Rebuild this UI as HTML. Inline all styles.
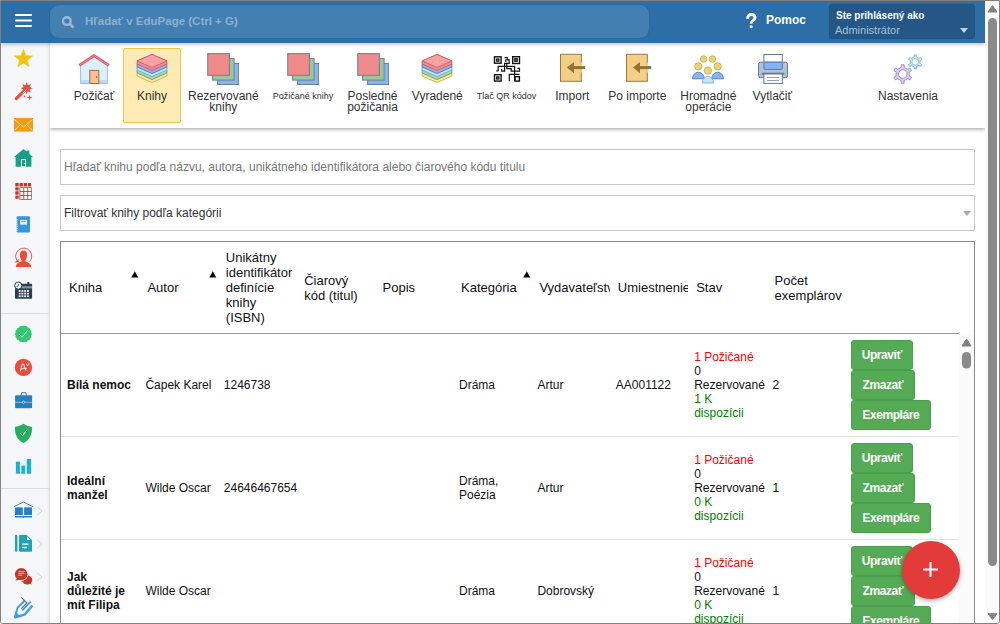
<!DOCTYPE html>
<html><head><meta charset="utf-8">
<style>
*{box-sizing:border-box}
html,body{margin:0;padding:0;width:1000px;height:624px;overflow:hidden;background:#fff;font-family:"Liberation Sans",sans-serif;color:#000}
#frame{position:absolute;left:0;top:0;width:1000px;height:624px;border:1px solid #808080;border-radius:0 0 3px 3px;overflow:hidden;background:#fff}
.abs{position:absolute}
#hdr{position:absolute;left:0;top:0;width:984px;height:42px;background:#2c6ea5;z-index:3;box-shadow:0 2px 3px rgba(40,30,20,.22)}
#gsearch{position:absolute;left:48px;top:3px;width:601px;height:35px;border-radius:10px;background:#437fb1;border:1px solid rgba(30,85,135,.55)}
#user{position:absolute;left:828px;top:3px;width:146px;height:35px;background:#245785;border-radius:3px;border:1px solid #22527e}
#side{position:absolute;left:0;top:41px;width:49px;height:590px;background:#f5f6f8;box-shadow:inset -3px 0 3px -2px rgba(0,0,0,.12);z-index:2}
#tb{position:absolute;left:49px;top:41px;width:935px;height:86px;background:#fff;box-shadow:0 2px 3px rgba(0,0,0,.28);z-index:1}
.ti{position:absolute;top:6px;height:75px;border:1px solid transparent;border-radius:2px}
.ti.sel{background:#fdebb3;border-color:#f1c552}
.lb{position:absolute;top:49px;text-align:center;font-size:12px;line-height:11px;color:#333;white-space:nowrap}
.lb.sm{font-size:9px}
.inp{position:absolute;left:59px;width:915px;height:36px;border:1px solid #c8c8c8;font-size:12px;line-height:34px;padding-left:3px}
#tbl{position:absolute;left:59px;top:240px;width:915px;height:500px;border:1px solid #8a8a8a}
.th{position:absolute;top:0;height:91px;font-size:13px;line-height:15px;color:#111;overflow:hidden;padding:0 2px 0 8px;display:flex;align-items:center}
.row{position:absolute;left:0;width:898px;border-bottom:1px solid #e3e3e3}
.td{position:absolute;top:0;height:102px;font-size:12px;line-height:14px;color:#111;padding:0 6px;display:flex;align-items:center}
.tdc,.thc{width:100%}
.btn{position:absolute;height:30px;letter-spacing:-0.45px;background:#55ab55;color:#fff;font-weight:bold;font-size:12px;line-height:28px;border-radius:3px;text-align:center;border:1px solid #4a9f4a}
.red{color:#f00}.grn{color:#008000}
#fab{position:absolute;left:901px;top:540px;width:58px;height:58px;border-radius:50%;background:#e33b39;box-shadow:0 2px 4px rgba(0,0,0,.3);z-index:5}
#vsb{position:absolute;left:984px;top:0;width:14px;height:622px;background:#fafafa;z-index:4}

</style></head><body>
<div id="frame">
  <div id="hdr">
    <svg class="abs" style="left:14px;top:10px" width="18" height="20" viewBox="0 0 18 20"><rect x="0" y="3.1" width="17" height="2" rx="0.8" fill="#fff"/><rect x="0" y="8.5" width="17" height="2" rx="0.8" fill="#fff"/><rect x="0" y="13.9" width="17" height="2" rx="0.8" fill="#fff"/></svg>
    <div id="gsearch">
      <svg class="abs" style="left:12px;top:11px" width="14" height="14" viewBox="0 0 14 14"><circle cx="4.9" cy="5.1" r="3.85" fill="none" stroke="#98bad8" stroke-width="2.3"/><path d="M7.7,7.9 L10.9,11" stroke="#98bad8" stroke-width="2.5" stroke-linecap="round"/></svg>
      <div class="abs" style="left:35px;top:9px;font-size:11.5px;font-weight:bold;color:#8cb0d1;line-height:14px;white-space:nowrap">Hľadať v EduPage (Ctrl + G)</div>
    </div>
    <svg class="abs" style="left:0;top:0" width="984" height="42" viewBox="1 1 984 42"><path d="M747.6,18.8 C747.5,15.6 749.3,14.5 751.2,14.5 C753.6,14.5 755,15.9 755,17.7 C755,19.6 753.7,20.3 752.6,21 C751.7,21.6 751.2,22.2 751.2,23.7" fill="none" stroke="#fff" stroke-width="2.9"/><circle cx="751.1" cy="26.7" r="1.55" fill="#fff"/></svg>
    <div class="abs" style="left:765px;top:12px;font-size:12px;font-weight:bold;color:#fff;line-height:15px">Pomoc</div>
    <div id="user">
      <div class="abs" style="left:6px;top:5px;font-size:10px;font-weight:bold;color:#fff;line-height:12px;white-space:nowrap">Ste prihlásený ako</div>
      <div class="abs" style="left:5px;top:18px;font-size:11px;color:#a3c0dc;line-height:14px">Administrátor</div>
      <div class="abs" style="left:130px;top:23px;width:0;height:0;border-left:4px solid transparent;border-right:4px solid transparent;border-top:5px solid #c9d3dd"></div>
    </div>
  </div>
  <div id="side"><svg class="abs" style="left:0;top:0" width="48" height="582" viewBox="1 42 48 582">
<rect x="1" y="313" width="48" height="1" fill="#dcdcdc"/>
<rect x="1" y="488" width="48" height="1" fill="#dcdcdc"/>
<polygon points="23.45,49.30 25.80,55.66 32.58,55.93 27.25,60.14 29.09,66.67 23.45,62.90 17.81,66.67 19.65,60.14 14.32,55.93 21.10,55.66" fill="#f1c40f" stroke="#f1c40f" stroke-width="0.6" stroke-linejoin="round"/>
<line x1="16.2" y1="98.7" x2="24.6" y2="90.3" stroke="#e74c3c" stroke-width="3.1" stroke-linecap="round"/>
<polygon points="26.60,82.10 27.82,85.24 30.91,83.89 29.56,86.98 32.70,88.20 29.56,89.42 30.91,92.51 27.82,91.16 26.60,94.30 25.38,91.16 22.29,92.51 23.64,89.42 20.50,88.20 23.64,86.98 22.29,83.89 25.38,85.24" fill="#e74c3c"/>
<line x1="22.6" y1="93.6" x2="26.6" y2="89.2" stroke="#f5f6f8" stroke-width="0.9"/>
<polygon points="29.60,94.60 30.24,96.86 32.50,97.50 30.24,98.14 29.60,100.40 28.96,98.14 26.70,97.50 28.96,96.86" fill="#e74c3c"/>
<polygon points="23.3,97.3 24.6,95.2 25.8,97.3" fill="#e74c3c"/>
<rect x="14" y="118" width="19" height="13.6" fill="#f39c12"/>
<path d="M14.3,119.4 L23.5,127 L32.7,119.4 M14.3,130.6 L19.6,125.2 M32.7,130.6 L27.4,125.2" stroke="#fbe3bd" stroke-width="0.9" fill="none"/>
<polygon points="14,157 23.5,149 26.8,151.8 26.8,150.6 29.4,150.6 29.4,154 33,157 31.4,157 31.4,166.8 15.6,166.8 15.6,157" fill="#17a085"/>
<rect x="21.4" y="159.6" width="4.2" height="7.2" fill="none" stroke="#f5f6f8" stroke-width="0.9"/>
<rect x="24.1" y="163" width="0.8" height="1" fill="#f5f6f8"/>
<rect x="15.30" y="183" width="3.4" height="3.4" rx="0.5" fill="#c0392b"/>
<rect x="19.45" y="183" width="3.4" height="3.4" rx="0.5" fill="#c0392b"/>
<rect x="23.60" y="183" width="3.4" height="3.4" rx="0.5" fill="#c0392b"/>
<rect x="27.75" y="183" width="3.4" height="3.4" rx="0.5" fill="#c0392b"/>
<rect x="15.3" y="187.15" width="3.4" height="3.4" rx="0.5" fill="#c0392b"/>
<rect x="15.3" y="191.30" width="3.4" height="3.4" rx="0.5" fill="#c0392b"/>
<rect x="15.3" y="195.45" width="3.4" height="3.4" rx="0.5" fill="#c0392b"/>
<rect x="19.45" y="187.15" width="12.45" height="12.65" rx="0.5" fill="#c0392b"/>
<rect x="20.30" y="188.00" width="3.05" height="3.1" fill="#fff"/>
<rect x="20.30" y="191.95" width="3.05" height="3.1" fill="#fff"/>
<rect x="20.30" y="195.90" width="3.05" height="3.1" fill="#fff"/>
<rect x="24.25" y="188.00" width="3.05" height="3.1" fill="#fff"/>
<rect x="24.25" y="191.95" width="3.05" height="3.1" fill="#fff"/>
<rect x="24.25" y="195.90" width="3.05" height="3.1" fill="#fff"/>
<rect x="28.20" y="188.00" width="3.05" height="3.1" fill="#fff"/>
<rect x="28.20" y="191.95" width="3.05" height="3.1" fill="#fff"/>
<rect x="28.20" y="195.90" width="3.05" height="3.1" fill="#fff"/>
<rect x="16.6" y="216.2" width="13.4" height="16.4" rx="1" fill="#3498db"/>
<rect x="20.2" y="220" width="6.8" height="4.6" fill="#fff"/><rect x="21" y="221.2" width="5.2" height="0.8" fill="#3498db"/><rect x="21" y="222.4" width="5.2" height="1.4" fill="#cfe5f6"/>
<rect x="15.9" y="219.30" width="2" height="0.7" fill="#fff"/>
<rect x="15.9" y="221.50" width="2" height="0.7" fill="#fff"/>
<rect x="15.9" y="223.70" width="2" height="0.7" fill="#fff"/>
<rect x="15.9" y="225.90" width="2" height="0.7" fill="#fff"/>
<rect x="15.9" y="228.10" width="2" height="0.7" fill="#fff"/>
<rect x="15.9" y="230.30" width="2" height="0.7" fill="#fff"/>
<path d="M19.9,255 C19.9,251.8 21.4,250.6 23.5,250.6 C25.6,250.6 27.1,251.8 27.1,255 C27.1,258 26,259.6 25.4,260.4 L25.6,262 L21.4,262 L21.6,260.4 C21,259.6 19.9,258 19.9,255 Z" fill="#e74c3c"/>
<path d="M15.8,267 C16,263.5 18.6,262.6 21.3,261.6 L25.7,261.6 C28.4,262.6 31,263.5 31.2,267 Z" fill="#e74c3c"/>
<path d="M17,260.5 A8,8 0 1 1 29.6,261.5" fill="none" stroke="#e74c3c" stroke-width="0.9"/>
<polygon points="14.6,262.5 18.4,258.8 18.9,262.2" fill="#e74c3c"/>
<rect x="15" y="283.8" width="17.1" height="15" rx="0.8" fill="#2c3e50"/>
<rect x="22" y="286.2" width="10" height="2.2" fill="#8a96a3"/>
<rect x="27.3" y="282" width="2" height="2.4" fill="#2c3e50"/>
<rect x="18.70" y="290.10" width="1.9" height="1.7" fill="#fff"/>
<rect x="18.70" y="292.75" width="1.9" height="1.7" fill="#fff"/>
<rect x="18.70" y="295.40" width="1.9" height="1.7" fill="#fff"/>
<rect x="21.45" y="290.10" width="1.9" height="1.7" fill="#fff"/>
<rect x="21.45" y="292.75" width="1.9" height="1.7" fill="#fff"/>
<rect x="21.45" y="295.40" width="1.9" height="1.7" fill="#fff"/>
<rect x="24.20" y="290.10" width="1.9" height="1.7" fill="#fff"/>
<rect x="24.20" y="292.75" width="1.9" height="1.7" fill="#fff"/>
<rect x="24.20" y="295.40" width="1.9" height="1.7" fill="#fff"/>
<rect x="26.95" y="290.10" width="1.9" height="1.7" fill="#fff"/>
<rect x="26.95" y="292.75" width="1.9" height="1.7" fill="#fff"/>
<rect x="26.95" y="295.40" width="1.9" height="1.7" fill="#fff"/>
<circle cx="18.3" cy="285.6" r="3.6" fill="#f5f6f8" stroke="#2c3e50" stroke-width="1"/>
<path d="M18.5,284 L17.6,286.6 L16.4,286.6" stroke="#2c3e50" stroke-width="0.8" fill="none"/>
<polygon points="23.40,325.40 24.94,326.25 26.69,326.05 27.79,327.43 29.48,327.92 29.97,329.61 31.35,330.71 31.15,332.46 32.00,334.00 31.15,335.54 31.35,337.29 29.97,338.39 29.48,340.08 27.79,340.57 26.69,341.95 24.94,341.75 23.40,342.60 21.86,341.75 20.11,341.95 19.01,340.57 17.32,340.08 16.83,338.39 15.45,337.29 15.65,335.54 14.80,334.00 15.65,332.46 15.45,330.71 16.83,329.61 17.32,327.92 19.01,327.43 20.11,326.05 21.86,326.25" fill="#2ecc71"/>
<path d="M19.2,334.2 L22.2,337.1 L27.4,330.6" stroke="#fff" stroke-width="0.9" fill="none"/>
<circle cx="23.45" cy="367.4" r="8.65" fill="#e74c3c"/>
<path d="M20.4,371 L22.3,364 Q22.8,362.9 23.5,364 L25.9,370.2 M20.6,369.6 Q23.2,367.6 26.3,368.4 M26.6,364.3 L27.6,365.9 L28.9,363.5" stroke="#fff" stroke-width="0.9" fill="none" stroke-linecap="round"/>
<path d="M21,395.4 L21.6,392.7 L25.8,392.7 L26.4,395.4" fill="none" stroke="#2980b9" stroke-width="1"/>
<rect x="15.1" y="395.2" width="17" height="13.1" rx="1" fill="#2980b9"/>
<rect x="15.1" y="401.9" width="17" height="0.6" fill="#cfe0ee"/>
<circle cx="23.6" cy="402.2" r="1.2" fill="#2980b9" stroke="#e8f0f6" stroke-width="0.6"/>
<path d="M23.5,423.8 C26.5,425.6 29.5,426.6 32.1,427 C32.2,434 30,439.8 23.5,443 C17,439.8 14.8,434 14.9,427 C17.5,426.6 20.5,425.6 23.5,423.8 Z" fill="#27ae60"/>
<path d="M20.3,433.4 L22.6,435.6 L26.8,429.8" stroke="#fff" stroke-width="0.9" fill="none"/>
<rect x="15.9" y="461.6" width="4" height="12.2" fill="#17b3d1"/><rect x="21.4" y="465.6" width="3.8" height="8.2" fill="#17b3d1"/><rect x="26.7" y="459" width="4.4" height="14.8" fill="#17b3d1"/>
<path d="M14.2,506.6 L23.45,502 L32.7,506.6" stroke="#2a7fc1" stroke-width="0.9" fill="none"/>
<path d="M14.9,507.6 Q18.8,506.9 22.8,507.6 L22.8,515.1 L14.9,515.1 Z" fill="#2a7fc1"/><path d="M24.1,507.6 Q28,506.9 32,507.6 L32,515.1 L24.1,515.1 Z" fill="#2a7fc1"/>
<path d="M14.9,515.9 L32,515.9 L32,517.6 L24.2,517.6 L23.45,518.3 L22.7,517.6 L14.9,517.6 Z" fill="#2a7fc1"/>
<path d="M37.3,507.0 L42,511.0 L37.3,515.0" stroke="#cfcfcf" stroke-width="0.9" fill="none"/>
<path d="M37.3,540.0 L42,544.0 L37.3,548.0" stroke="#cfcfcf" stroke-width="0.9" fill="none"/>
<path d="M37.3,573.0 L42,577.0 L37.3,581.0" stroke="#cfcfcf" stroke-width="0.9" fill="none"/>
<rect x="14.9" y="534.7" width="2.5" height="17.1" rx="1.2" fill="#22a2b2"/>
<path d="M20,535 L26.6,535 L32,540 L32,550.6 Q32,551.8 30.8,551.8 L20.2,551.8 Q19,551.8 19,550.6 L19,536 Q19,535 20,535 Z" fill="#22a2b2"/>
<path d="M27,536.6 L27,540.1 L30.4,540.1 Z" fill="#fff"/>
<rect x="22.1" y="543.4" width="6.5" height="1.4" rx="0.6" fill="#fff"/><rect x="22.1" y="546.8" width="4.9" height="1.4" rx="0.6" fill="#fff"/>
<ellipse cx="27.3" cy="580" rx="5" ry="4.5" fill="#c0392b"/><path d="M26,582 L32.2,584.8 L28.5,581 Z" fill="#c0392b"/><path d="M21,581.3 L25,578 L27,583 Z" fill="#c0392b"/>
<ellipse cx="21.2" cy="574.2" rx="6.9" ry="6.7" fill="#f5f6f8"/>
<ellipse cx="21.2" cy="574.2" rx="6.3" ry="6.1" fill="#c0392b"/><path d="M17,578.5 L14.8,580.6 L20.5,579.8 Z" fill="#c0392b"/>
<rect x="18.3" y="571" width="6.3" height="1.1" fill="#e9a19a"/><rect x="18.3" y="572.8" width="6.3" height="1.1" fill="#e9a19a"/><rect x="18.3" y="574.7" width="4" height="1.1" fill="#e9a19a"/>
<path d="M14.8,617.6 L17.6,607.6 L24.6,600.8" fill="none" stroke="#3b9fe3" stroke-width="1.9" stroke-linejoin="round"/>
<path d="M14.8,617.6 L25,614.3 L32.4,605.4" fill="none" stroke="#3b9fe3" stroke-width="2.4" stroke-linejoin="round"/>
<path d="M22.2,610.4 L30.7,601.7" fill="none" stroke="#3b9fe3" stroke-width="1.8"/>
<polygon points="14.2,618.3 15.8,611.6 20,616.2" fill="#3b9fe3"/>
<path d="M21.3,597.3 L26.9,603 L21.3,608.6" stroke="#6e6870" stroke-width="1.1" fill="none"/>
</svg></div>
  <div id="tb"><div class="ti" style="left:15.00px;width:58.00px"></div>
<svg class="abs" style="left:28.00px;top:11.00px" width="32" height="32" viewBox="0 0 32 32"><path d="M2.6,12.2 L16,3.4 L29.4,12.2 L29.4,30.5 L2.6,30.5 Z" fill="#dcf0fd" stroke="#9dbde2" stroke-width="1"/><rect x="2.6" y="27" width="26.8" height="3.5" fill="#b9dbf4"/><path d="M2.6,30.5 L29.4,30.5" stroke="#9dbde2" stroke-width="1"/><rect x="11.8" y="17.4" width="9" height="13.1" fill="#fdc291" stroke="#9c6b47" stroke-width="1"/><circle cx="18.6" cy="24" r="0.7" fill="#7a4f33"/><path d="M1.2,12.4 L16,2.6 L30.8,12.4" fill="none" stroke="#df5560" stroke-width="2.8" stroke-linejoin="miter"/><path d="M1.6,12.3 L16,2.7 L30.4,12.3" fill="none" stroke="#f39aa0" stroke-width="0.8"/></svg>
<div class="lb" style="left:15.00px;width:58.00px">Požičať</div>
<div class="ti sel" style="left:73.00px;width:58.00px"></div>
<svg class="abs" style="left:86.00px;top:11.00px" width="32" height="32" viewBox="0 0 32 32"><polygon points="1.1,20.0 16,13.5 30.9,20.0 30.9,23.0 16,29.5 1.1,23.0" fill="#fbe8a3" stroke="#d8b653" stroke-width="1" stroke-linejoin="round"/><polygon points="1.1,17.0 16,10.5 30.9,17.0 30.9,20.0 16,26.5 1.1,20.0" fill="#a9d6ac" stroke="#6da672" stroke-width="1" stroke-linejoin="round"/><polygon points="1.1,14.0 16,7.5 30.9,14.0 30.9,17.0 16,23.5 1.1,17.0" fill="#c6e5fb" stroke="#7da9d9" stroke-width="1" stroke-linejoin="round"/><polygon points="1.1,11.0 16,4.5 30.9,11.0 30.9,14.0 16,20.5 1.1,14.0" fill="#89b5ee" stroke="#4f7fc6" stroke-width="1" stroke-linejoin="round"/><polygon points="1.1,8 16,1.5 30.9,8 30.9,11 16,17.5 1.1,11" fill="#ef8e92" stroke="#d4606a" stroke-width="1" stroke-linejoin="round"/><polygon points="1.1,8 16,1.5 30.9,8 16,14.5" fill="#f6a3a6" stroke="#d4606a" stroke-width="1" stroke-linejoin="round"/><circle cx="11" cy="8.5" r="0.45" fill="#e0747a"/><circle cx="14" cy="6.8" r="0.45" fill="#e0747a"/><circle cx="18.5" cy="9" r="0.45" fill="#e0747a"/><circle cx="21" cy="7.2" r="0.45" fill="#e0747a"/></svg>
<div class="lb" style="left:73.00px;width:58.00px">Knihy</div>
<div class="ti" style="left:131.00px;width:84.70px"></div>
<svg class="abs" style="left:157.00px;top:11.00px" width="32" height="32" viewBox="0 0 32 32"><rect x="10.6" y="10.5" width="21" height="21" fill="#89b4ef" stroke="#6b7f95" stroke-width="1"/><rect x="5.6" y="5.6" width="21.5" height="21.5" fill="#9cc79b" stroke="#6b7f95" stroke-width="1"/><rect x="0.7" y="0.6" width="21.7" height="21.7" fill="#f08b8b" stroke="#6b7f95" stroke-width="1"/></svg>
<div class="lb" style="left:131.00px;width:84.70px">Rezervované<br>knihy</div>
<div class="ti" style="left:215.70px;width:74.50px"></div>
<svg class="abs" style="left:237.00px;top:11.00px" width="32" height="32" viewBox="0 0 32 32"><rect x="10.6" y="10.5" width="21" height="21" fill="#89b4ef" stroke="#6b7f95" stroke-width="1"/><rect x="5.6" y="5.6" width="21.5" height="21.5" fill="#9cc79b" stroke="#6b7f95" stroke-width="1"/><rect x="0.7" y="0.6" width="21.7" height="21.7" fill="#f08b8b" stroke="#6b7f95" stroke-width="1"/></svg>
<div class="lb sm" style="left:215.70px;width:74.50px">Požičané knihy</div>
<div class="ti" style="left:290.20px;width:64.70px"></div>
<svg class="abs" style="left:307.00px;top:11.00px" width="32" height="32" viewBox="0 0 32 32"><rect x="10.6" y="10.5" width="21" height="21" fill="#89b4ef" stroke="#6b7f95" stroke-width="1"/><rect x="5.6" y="5.6" width="21.5" height="21.5" fill="#9cc79b" stroke="#6b7f95" stroke-width="1"/><rect x="0.7" y="0.6" width="21.7" height="21.7" fill="#f08b8b" stroke="#6b7f95" stroke-width="1"/></svg>
<div class="lb" style="left:290.20px;width:64.70px">Posledné<br>požičania</div>
<div class="ti" style="left:354.90px;width:64.90px"></div>
<svg class="abs" style="left:371.00px;top:11.00px" width="32" height="32" viewBox="0 0 32 32"><polygon points="1.1,20.0 16,13.5 30.9,20.0 30.9,23.0 16,29.5 1.1,23.0" fill="#fbe8a3" stroke="#d8b653" stroke-width="1" stroke-linejoin="round"/><polygon points="1.1,17.0 16,10.5 30.9,17.0 30.9,20.0 16,26.5 1.1,20.0" fill="#a9d6ac" stroke="#6da672" stroke-width="1" stroke-linejoin="round"/><polygon points="1.1,14.0 16,7.5 30.9,14.0 30.9,17.0 16,23.5 1.1,17.0" fill="#c6e5fb" stroke="#7da9d9" stroke-width="1" stroke-linejoin="round"/><polygon points="1.1,11.0 16,4.5 30.9,11.0 30.9,14.0 16,20.5 1.1,14.0" fill="#89b5ee" stroke="#4f7fc6" stroke-width="1" stroke-linejoin="round"/><polygon points="1.1,8 16,1.5 30.9,8 30.9,11 16,17.5 1.1,11" fill="#ef8e92" stroke="#d4606a" stroke-width="1" stroke-linejoin="round"/><polygon points="1.1,8 16,1.5 30.9,8 16,14.5" fill="#f6a3a6" stroke="#d4606a" stroke-width="1" stroke-linejoin="round"/><circle cx="11" cy="8.5" r="0.45" fill="#e0747a"/><circle cx="14" cy="6.8" r="0.45" fill="#e0747a"/><circle cx="18.5" cy="9" r="0.45" fill="#e0747a"/><circle cx="21" cy="7.2" r="0.45" fill="#e0747a"/></svg>
<div class="lb" style="left:354.90px;width:64.90px">Vyradené</div>
<div class="ti" style="left:419.80px;width:73.50px"></div>
<svg class="abs" style="left:441.00px;top:11.00px" width="32" height="32" viewBox="0 0 32 32"><g transform="translate(-491,-53)"><g fill="none" stroke="#111" stroke-width="1.4"><rect x="494.5" y="56.8" width="6.6" height="6.4"/><rect x="512.7" y="56.7" width="6.8" height="6.8"/><rect x="494.5" y="74.7" width="6.6" height="6.4"/><rect x="515" y="76.7" width="4.4" height="4.4"/></g><g fill="#666" stroke="#111" stroke-width="1"><rect x="496.6" y="58.9" width="2.4" height="2.3"/><rect x="514.7" y="58.6" width="2.6" height="2.8"/><rect x="496.6" y="76.8" width="2.4" height="2.3"/></g><path d="M504.6,57.6 H507.2 V59.9 H509.2 V63.4 H504.6 V71.2 H501.7 V68.9 M498.2,71 V66.3 H514.6 V81 M506.8,63.4 V68.6 H511.2 V71.2 H519.5 V68.4 H517.3 M509.3,81.2 V74.4 H519.5 M496.3,70.8 H498.2 M505.8,59.4 V62" fill="none" stroke="#111" stroke-width="1.2"/></g></svg>
<div class="lb sm" style="left:419.80px;width:73.50px">Tlač QR kódov</div>
<div class="ti" style="left:493.30px;width:58.00px"></div>
<svg class="abs" style="left:505.50px;top:11.00px" width="32" height="32" viewBox="0 0 32 32"><rect x="4.5" y="1.3" width="20.8" height="27" fill="#f5cf87" stroke="#9c7a3c" stroke-width="1"/><rect x="24.6" y="9.5" width="1.5" height="10" fill="#f5cf87"/><polygon points="11,14.6 18,8.9 18,20.3" fill="#917335"/><rect x="17.5" y="13.1" width="11.7" height="3" fill="#917335"/></svg>
<div class="lb" style="left:493.30px;width:58.00px">Import</div>
<div class="ti" style="left:551.30px;width:72.00px"></div>
<svg class="abs" style="left:571.80px;top:11.00px" width="32" height="32" viewBox="0 0 32 32"><rect x="4.5" y="1.3" width="20.8" height="27" fill="#f5cf87" stroke="#9c7a3c" stroke-width="1"/><rect x="24.6" y="9.5" width="1.5" height="10" fill="#f5cf87"/><polygon points="11,14.6 18,8.9 18,20.3" fill="#917335"/><rect x="17.5" y="13.1" width="11.7" height="3" fill="#917335"/></svg>
<div class="lb" style="left:551.30px;width:72.00px">Po importe</div>
<div class="ti" style="left:623.30px;width:70.00px"></div>
<svg class="abs" style="left:642.00px;top:11.00px" width="32" height="32" viewBox="0 0 32 32"><g fill="#e8d27b" stroke="#c9a94c" stroke-width="0.8"><circle cx="11.6" cy="6" r="3.3"/><circle cx="20.4" cy="6" r="3.3"/><circle cx="6.3" cy="13.4" r="3.6"/><circle cx="25.6" cy="13.4" r="3.6"/><circle cx="15.9" cy="17.6" r="3.7"/></g><path d="M0.5,25.8 A5.9,6.6 0 0 1 12.3,25.8 Z" fill="#88b3ee" stroke="#4f7fc6" stroke-width="0.9"/><path d="M19.7,25.8 A5.9,6.6 0 0 1 31.5,25.8 Z" fill="#88b3ee" stroke="#4f7fc6" stroke-width="0.9"/><path d="M10.3,30 A5.6,6.6 0 0 1 21.5,30 Z" fill="#c6e5fb" stroke="#7da9d9" stroke-width="0.9"/></svg>
<div class="lb" style="left:623.30px;width:70.00px">Hromadné<br>operácie</div>
<div class="ti" style="left:693.30px;width:58.00px"></div>
<svg class="abs" style="left:707.00px;top:11.00px" width="32" height="32" viewBox="0 0 32 32"><rect x="6.9" y="1.5" width="18.4" height="8" fill="#fff" stroke="#66788f" stroke-width="1"/><rect x="1.5" y="9.2" width="29" height="15.5" rx="2" fill="#b3c1d4" stroke="#66788f" stroke-width="1"/><rect x="6.9" y="9.2" width="18.4" height="7.2" rx="1" fill="#88b3ee" stroke="#4e7cc0" stroke-width="1"/><rect x="4.5" y="19.8" width="23" height="2" rx="1" fill="#66788f"/><rect x="6.9" y="21" width="18.4" height="9.4" fill="#fff" stroke="#66788f" stroke-width="1"/><rect x="10" y="24" width="12" height="1" fill="#8fa0b3"/><rect x="10" y="27" width="12" height="1" fill="#8fa0b3"/><circle cx="27.6" cy="12.6" r="0.9" fill="#f4d23c"/></svg>
<div class="lb" style="left:693.30px;width:58.00px">Vytlačiť</div>
<div class="ti" style="left:821.00px;width:74.00px"></div>
<svg class="abs" style="left:842.00px;top:11.00px" width="32" height="32" viewBox="0 0 32 32"><polygon points="9.19,14.27 9.23,11.72 12.17,11.72 12.21,14.27 15.78,16.33 18.01,15.08 19.48,17.63 17.28,18.94 17.28,23.06 19.48,24.37 18.01,26.92 15.78,25.67 12.21,27.73 12.17,30.28 9.23,30.28 9.19,27.73 5.62,25.67 3.39,26.92 1.92,24.37 4.12,23.06 4.12,18.94 1.92,17.63 3.39,15.08 5.62,16.33" fill="#d9cbf1" stroke="#9a80c2" stroke-width="0.8" stroke-linejoin="round"/><circle cx="10.7" cy="21" r="4.3" fill="#fff" stroke="#9a80c2" stroke-width="0.8"/><polygon points="22.09,3.92 22.09,1.89 24.31,1.89 24.31,3.92 26.95,5.45 28.72,4.43 29.83,6.36 28.07,7.37 28.07,10.43 29.83,11.44 28.72,13.37 26.95,12.35 24.31,13.88 24.31,15.91 22.09,15.91 22.09,13.88 19.45,12.35 17.68,13.37 16.57,11.44 18.33,10.43 18.33,7.37 16.57,6.36 17.68,4.43 19.45,5.45" fill="#c9e8f8" stroke="#78add2" stroke-width="0.8" stroke-linejoin="round"/><circle cx="23.2" cy="8.9" r="3.3" fill="#fff" stroke="#78add2" stroke-width="0.8"/></svg>
<div class="lb" style="left:821.00px;width:74.00px">Nastavenia</div></div>
  <div class="inp" style="top:148px;color:#777">Hľadať knihu podľa názvu, autora, unikátneho identifikátora alebo čiarového kódu titulu</div>
  <div class="inp" style="top:194px;color:#333">Filtrovať knihy podľa kategórii
    <div class="abs" style="left:902px;top:15px;width:0;height:0;border-left:4px solid transparent;border-right:4px solid transparent;border-top:5px solid #aaa"></div>
  </div>
  <div id="tbl"><div class="th" style="left:0.00px;width:78.40px"><div class="thc">Kniha</div></div>
<div class="th" style="left:78.40px;width:78.40px"><div class="thc">Autor</div></div>
<div class="th" style="left:156.80px;width:78.40px"><div class="thc">Unikátny identifikátor definície knihy (ISBN)</div></div>
<div class="th" style="left:235.20px;width:78.40px"><div class="thc">Čiarový kód (titul)</div></div>
<div class="th" style="left:313.60px;width:78.40px"><div class="thc">Popis</div></div>
<div class="th" style="left:392.00px;width:78.40px"><div class="thc">Kategória</div></div>
<div class="th" style="left:470.40px;width:78.40px"><div class="thc">Vydavateľstvo</div></div>
<div class="th" style="left:548.80px;width:78.40px"><div class="thc">Umiestnenie</div></div>
<div class="th" style="left:627.20px;width:78.40px"><div class="thc">Stav</div></div>
<div class="th" style="left:705.60px;width:78.40px"><div class="thc">Počet exemplárov</div></div>
<svg class="abs" style="left:69.80px;top:28.80px" width="8" height="7" viewBox="0 0 8 7"><polygon points="0.3,6.6 3.8,0.2 7.3,6.6" fill="#000"/></svg>
<svg class="abs" style="left:148.20px;top:28.80px" width="8" height="7" viewBox="0 0 8 7"><polygon points="0.3,6.6 3.8,0.2 7.3,6.6" fill="#000"/></svg>
<svg class="abs" style="left:461.80px;top:28.80px" width="8" height="7" viewBox="0 0 8 7"><polygon points="0.3,6.6 3.8,0.2 7.3,6.6" fill="#000"/></svg>
<div class="abs" style="left:0;top:91px;width:898px;height:1px;background:#8b9bb0"></div>
<div class="abs" style="left:898px;top:92px;width:15px;height:400px;background:#fafafa"></div>
<svg class="abs" style="left:898px;top:92px" width="15" height="40" viewBox="0 0 15 40"><polygon points="3,12 7.5,5 12,12" fill="#808080" stroke="#808080" stroke-width="1" stroke-linejoin="round"/><rect x="3" y="18" width="9" height="16.5" rx="4.5" fill="#8a8a8a"/></svg>
<div class="row" style="top:92px;height:103px">
<div class="td" style="left:0.00px;width:78.40px"><div class="tdc"><b>Bílá nemoc</b></div></div>
<div class="td" style="left:78.40px;width:78.40px"><div class="tdc">Čapek Karel</div></div>
<div class="td" style="left:156.80px;width:78.40px"><div class="tdc">1246738</div></div>
<div class="td" style="left:392.00px;width:78.40px"><div class="tdc">Dráma</div></div>
<div class="td" style="left:470.40px;width:78.40px"><div class="tdc">Artur</div></div>
<div class="td" style="left:548.80px;width:78.40px"><div class="tdc">AA001122</div></div>
<div class="td" style="left:627.20px;width:78.40px"><div class="tdc"><span class="red">1 Požičané</span><br>0<br>Rezervované<br><span class="grn">1 K<br>dispozícii</span></div></div>
<div class="td" style="left:705.60px;width:78.40px"><div class="tdc">2</div></div>
<div class="btn" style="left:790.00px;top:6px;width:61.5px">Upraviť</div>
<div class="btn" style="left:790.00px;top:36px;width:63.6px">Zmazať</div>
<div class="btn" style="left:790.00px;top:66px;width:79.6px">Exempláre</div>
</div>
<div class="row" style="top:195px;height:103px">
<div class="td" style="left:0.00px;width:78.40px"><div class="tdc"><b>Ideální manžel</b></div></div>
<div class="td" style="left:78.40px;width:78.40px"><div class="tdc">Wilde Oscar</div></div>
<div class="td" style="left:156.80px;width:78.40px"><div class="tdc">24646467654</div></div>
<div class="td" style="left:392.00px;width:78.40px"><div class="tdc">Dráma, Poézia</div></div>
<div class="td" style="left:470.40px;width:78.40px"><div class="tdc">Artur</div></div>
<div class="td" style="left:548.80px;width:78.40px"><div class="tdc"></div></div>
<div class="td" style="left:627.20px;width:78.40px"><div class="tdc"><span class="red">1 Požičané</span><br>0<br>Rezervované<br><span class="grn">0 K<br>dispozícii</span></div></div>
<div class="td" style="left:705.60px;width:78.40px"><div class="tdc">1</div></div>
<div class="btn" style="left:790.00px;top:6px;width:61.5px">Upraviť</div>
<div class="btn" style="left:790.00px;top:36px;width:63.6px">Zmazať</div>
<div class="btn" style="left:790.00px;top:66px;width:79.6px">Exempláre</div>
</div>
<div class="row" style="top:298px;height:103px">
<div class="td" style="left:0.00px;width:78.40px"><div class="tdc"><b>Jak důležité je mít Filipa</b></div></div>
<div class="td" style="left:78.40px;width:78.40px"><div class="tdc">Wilde Oscar</div></div>
<div class="td" style="left:156.80px;width:78.40px"><div class="tdc"></div></div>
<div class="td" style="left:392.00px;width:78.40px"><div class="tdc">Dráma</div></div>
<div class="td" style="left:470.40px;width:78.40px"><div class="tdc">Dobrovský</div></div>
<div class="td" style="left:548.80px;width:78.40px"><div class="tdc"></div></div>
<div class="td" style="left:627.20px;width:78.40px"><div class="tdc"><span class="red">1 Požičané</span><br>0<br>Rezervované<br><span class="grn">0 K<br>dispozícii</span></div></div>
<div class="td" style="left:705.60px;width:78.40px"><div class="tdc">1</div></div>
<div class="btn" style="left:790.00px;top:6px;width:61.5px">Upraviť</div>
<div class="btn" style="left:790.00px;top:36px;width:63.6px">Zmazať</div>
<div class="btn" style="left:790.00px;top:66px;width:79.6px">Exempláre</div>
</div></div>
  <div id="fab"><svg class="abs" style="left:21px;top:21px" width="15" height="15" viewBox="0 0 15 15"><rect x="6.5" y="0" width="2" height="15" fill="#fff"/><rect x="0" y="6.5" width="15" height="2" fill="#fff"/></svg></div>
  <div id="vsb">
    <svg class="abs" style="left:0;top:0" width="14" height="622" viewBox="0 0 14 622"><polygon points="3,11 7.5,4.5 12,11" fill="#808080" stroke="#808080" stroke-width="1" stroke-linejoin="round"/><rect x="3" y="17" width="9" height="548" rx="4.5" fill="#8a8a8a"/><polygon points="3,612.8 7.5,618.6 12,612.8" fill="#808080" stroke="#808080" stroke-width="1" stroke-linejoin="round"/></svg>
  </div>
</div>
</body></html>
